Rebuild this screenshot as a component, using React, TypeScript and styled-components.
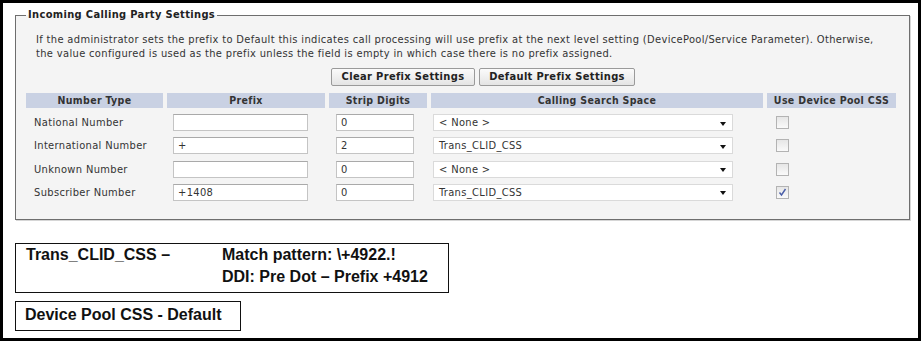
import React from "react";
import styled, { createGlobalStyle } from "styled-components";

const Global = createGlobalStyle`
  html, body { margin: 0; padding: 0; background: #fff; }
  * { box-sizing: border-box; }
`;

const UI_FONT = `"DejaVu Sans Condensed", "DejaVu Sans", sans-serif`;

const Frame = styled.div`
  width: 921px;
  height: 341px;
  border: 3px solid #000;
  padding: 5px 0 0 12px;
  display: flex;
  flex-direction: column;
  background: #fff;
`;

const Fieldset = styled.fieldset`
  margin: 0;
  width: 895px;
  height: 212px;
  border: 1px solid #6e6e6e;
  box-shadow: 1px 1px 0 #d6d6d6;
  background: #f4f4f4;
  padding: 11px 0 0 10px;
  font-family: ${UI_FONT};
  font-size: 11px;
  letter-spacing: 0.35px;
  color: #333;
`;

const Legend = styled.legend`
  margin-left: 0;
  padding: 0 2px;
  font-weight: bold;
  font-size: 11px;
  line-height: 14px;
  color: #222;
`;

const Note = styled.p`
  margin: 0;
  padding: 0 22px 0 10px;
  line-height: 14px;
  font-size: 11px;
  color: #333;
`;

const ButtonRow = styled.div`
  display: flex;
  gap: 4px;
  padding-left: 305px;
  margin-top: 7px;
`;

const Button = styled.button<{ $w: number }>`
  width: ${(p) => p.$w}px;
  height: 18px;
  padding: 0;
  border: 1px solid #9a9a9a;
  border-radius: 2px;
  background: linear-gradient(#fbfbfb, #e4e4e4);
  font-family: ${UI_FONT};
  font-weight: bold;
  font-size: 11px;
  letter-spacing: 0.35px;
  color: #222;
  line-height: 16px;
`;

const Grid = styled.div`
  display: grid;
  grid-template-columns: 137px 158px 98px 332px 129px;
  grid-template-rows: 15px;
  column-gap: 4px;
  grid-auto-rows: 23.3px;
  margin-top: 7px;
`;

const HeadCell = styled.div`
  background: #c9d1e3;
  font-weight: bold;
  font-size: 10.5px;
  line-height: 15px;
  text-align: center;
  color: #333;
`;

const Cell = styled.div<{ $pad?: number }>`
  display: flex;
  align-items: flex-start;
  padding-left: ${(p) => p.$pad ?? 0}px;
  padding-top: 6px;
`;

const Label = styled.span`
  font-size: 11px;
  line-height: 17px;
  color: #333;
`;

const TextBox = styled.input<{ $w: number }>`
  width: ${(p) => p.$w}px;
  height: 17px;
  border: 1px solid #c4c4c4;
  border-top-color: #a9a9a9;
  background: #fff;
  padding: 0 4px;
  font-family: ${UI_FONT};
  font-size: 11px;
  letter-spacing: 0.35px;
  color: #333;
  outline: none;
`;

const Select = styled.div`
  width: 300px;
  height: 17px;
  border: 1px solid #dadada;
  background: #fff;
  display: flex;
  align-items: center;
  justify-content: space-between;
  padding: 0 6px 0 5px;
  font-size: 11px;
  color: #333;
`;

const Arrow = styled.span`
  width: 0;
  height: 0;
  border-left: 3.5px solid transparent;
  border-right: 3.5px solid transparent;
  border-top: 4px solid #111;
  margin-top: 2px;
`;

const Check = styled.span`
  width: 13px;
  height: 13px;
  margin-top: 2px;
  border: 1px solid #b3b3b3;
  background: linear-gradient(#e6e6e6, #fafafa);
  display: inline-flex;
  align-items: center;
  justify-content: center;
`;

const Boxes = styled.div`
  display: flex;
  flex-direction: column;
  gap: 8px;
  margin-top: 23px;
  font-family: "Liberation Sans", Arial, sans-serif;
  font-weight: bold;
  font-size: 16px;
  color: #111;
`;

const NoteBox = styled.div<{ $w: number }>`
  width: ${(p) => p.$w}px;
  border: 1px solid #111;
  line-height: 22px;
`;

const PatternBox = styled(NoteBox)`
  display: grid;
  grid-template-columns: 196px auto;
  padding: 0 0 4px 10px;
`;

const PoolBox = styled(NoteBox)`
  padding: 2px 0 4px 9px;
`;

type Row = { label: string; prefix: string; strip: string; css: string; checked: boolean };

const rows: Row[] = [
  { label: "National Number", prefix: "", strip: "0", css: "< None >", checked: false },
  { label: "International Number", prefix: "+", strip: "2", css: "Trans_CLID_CSS", checked: false },
  { label: "Unknown Number", prefix: "", strip: "0", css: "< None >", checked: false },
  { label: "Subscriber Number", prefix: "+1408", strip: "0", css: "Trans_CLID_CSS", checked: true },
];

export default function App() {
  return (
    <>
      <Global />
      <Frame>
        <Fieldset>
          <Legend>Incoming Calling Party Settings</Legend>
          <Note>
            If the administrator sets the prefix to Default this indicates call processing will use prefix at the
            next level setting (DevicePool/Service Parameter). Otherwise, the value configured is used as the prefix
            unless the field is empty in which case there is no prefix assigned.
          </Note>
          <ButtonRow>
            <Button $w={144}>Clear Prefix Settings</Button>
            <Button $w={156}>Default Prefix Settings</Button>
          </ButtonRow>
          <Grid>
            <HeadCell>Number Type</HeadCell>
            <HeadCell>Prefix</HeadCell>
            <HeadCell>Strip Digits</HeadCell>
            <HeadCell>Calling Search Space</HeadCell>
            <HeadCell>Use Device Pool CSS</HeadCell>
            {rows.map((r) => (
              <React.Fragment key={r.label}>
                <Cell $pad={8}>
                  <Label>{r.label}</Label>
                </Cell>
                <Cell $pad={6}>
                  <TextBox $w={135} readOnly value={r.prefix} />
                </Cell>
                <Cell $pad={7}>
                  <TextBox $w={78} readOnly value={r.strip} />
                </Cell>
                <Cell $pad={2}>
                  <Select>
                    <span>{r.css}</span>
                    <Arrow />
                  </Select>
                </Cell>
                <Cell $pad={9}>
                  <Check>
                    {r.checked && (
                      <svg width="9" height="9" viewBox="0 0 9 9">
                        <path d="M1.5 4.5 L3.5 7 L7.5 1" fill="none" stroke="#4a5ea8" strokeWidth="1.4" />
                      </svg>
                    )}
                  </Check>
                </Cell>
              </React.Fragment>
            ))}
          </Grid>
        </Fieldset>
        <Boxes>
          <PatternBox $w={434}>
            <span>Trans_CLID_CSS –</span>
            <span>
              Match pattern: \+4922.!
              <br />
              DDI: Pre Dot – Prefix +4912
            </span>
          </PatternBox>
          <PoolBox $w={226}>Device Pool CSS - Default</PoolBox>
        </Boxes>
      </Frame>
    </>
  );
}
